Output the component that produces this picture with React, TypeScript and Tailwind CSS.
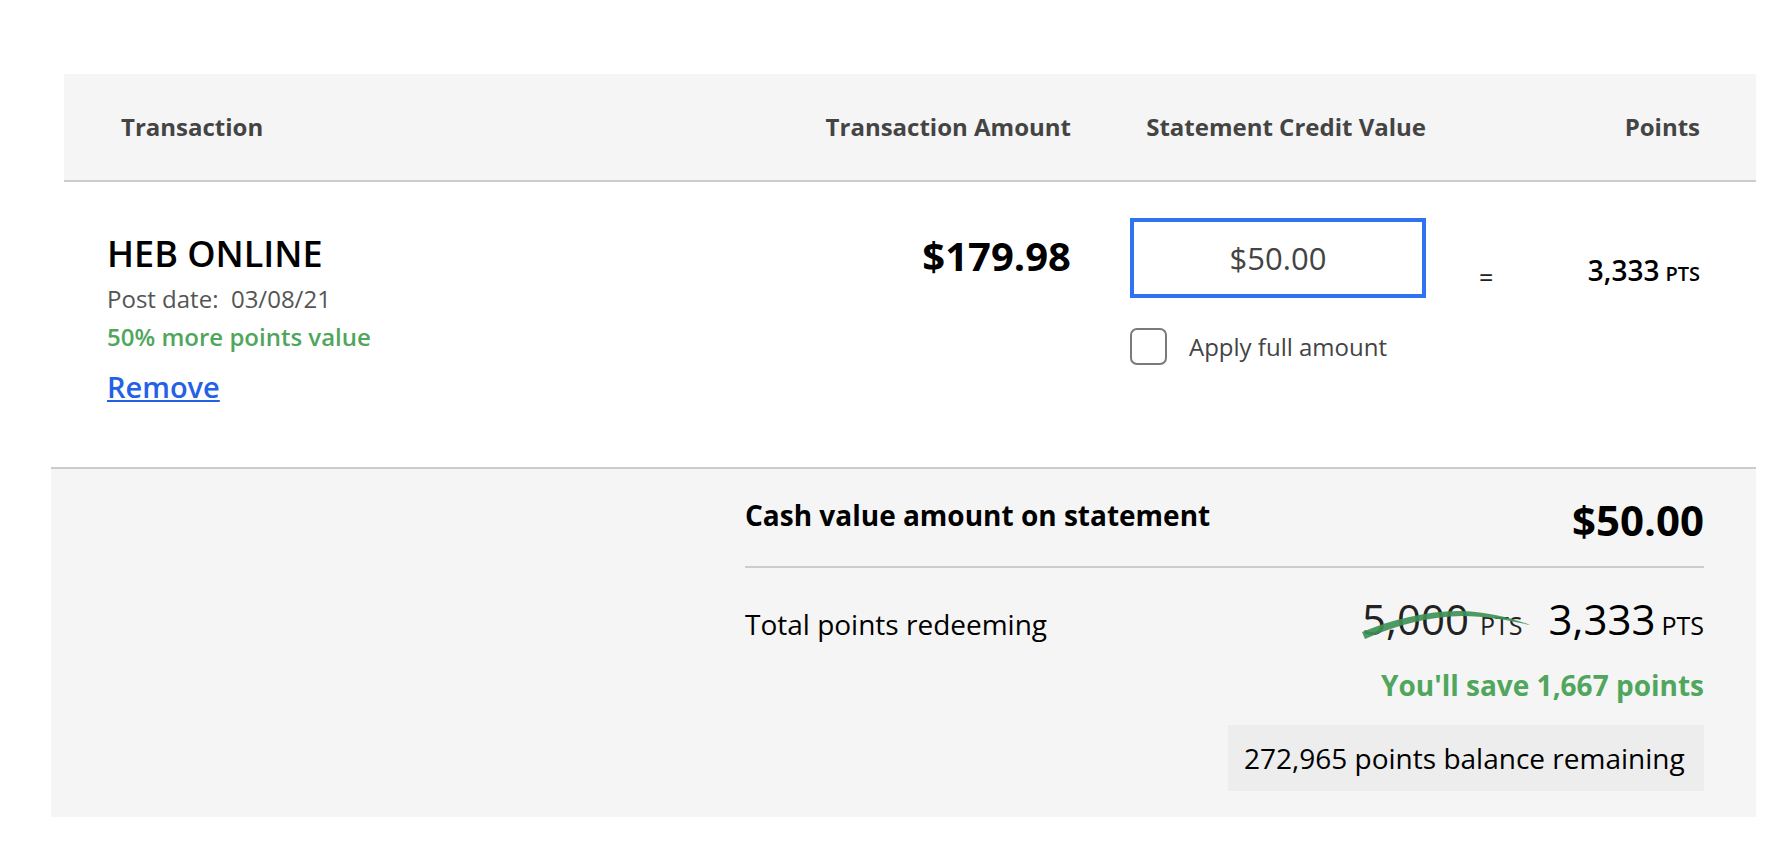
import React from "react"

function Strike() {
    return (
        <svg
            className="pointer-events-none absolute left-0 top-[12px]"
            width="172"
            height="34"
            viewBox="0 0 172 34"
        >
            <path
                d="M0 25 C 30 12, 70 3, 100 4 C 126 5, 150 11, 168 18 C 150 14, 124 9, 100 9 C 70 9, 34 18, 3 32 Z"
                fill="#3f9157"
                fillOpacity="0.92"
            />
        </svg>
    )
}

export default function App() {
    return (
        <div className="min-h-screen bg-white pt-[74px] font-['Open_Sans',sans-serif]">
            <div className="ml-[64px] w-[1692px]">
                {/* header */}
                <div className="flex h-[108px] items-center border-b-2 border-[#cccccc] bg-[#f5f5f5] text-[24px] font-bold text-[#444]">
                    <div className="w-[736px] pl-[57px]">Transaction</div>
                    <div className="w-[271px] text-right">Transaction Amount</div>
                    <div className="w-[59px]" />
                    <div className="w-[296px] text-right">Statement Credit Value</div>
                    <div className="w-[274px] text-right">Points</div>
                </div>

                {/* transaction row */}
                <div className="flex h-[285px]">
                    <div className="w-[736px] pl-[43px] pt-[50px]">
                        <div className="text-[36px] font-semibold leading-[44px] text-black">HEB ONLINE</div>
                        <div className="mt-[7px] text-[24px] leading-[32px] text-[#555]">Post date:&nbsp; 03/08/21</div>
                        <div className="mt-[6px] text-[24px] font-semibold leading-[32px] text-[#4fa65c]">
                            50% more points value
                        </div>
                        <a href="#" className="mt-[16px] block w-fit text-[29px] font-semibold leading-[36px] text-[#2461e6] underline">
                            Remove
                        </a>
                    </div>
                    <div className="w-[271px] pt-[50px] text-right text-[40px] font-bold leading-[48px] text-black">$179.98</div>
                    <div className="w-[59px]" />
                    <div className="w-[296px] pt-[36px]">
                        <input
                            readOnly
                            value="$50.00"
                            className="h-[80px] w-full border-4 border-[#2f72f2] bg-white text-center text-[31px] text-[#444] outline-none"
                        />
                        <label className="mt-[30px] flex items-center">
                            <span className="size-[37px] rounded-[7px] border-2 border-[#7a7a7a] bg-white" />
                            <span className="ml-[22px] text-[24px] text-[#444]">Apply full amount</span>
                        </label>
                    </div>
                    <div className="flex w-[274px]">
                        <div className="pl-[53px] pt-[77px] text-[25px] leading-[36px] text-[#222]">=</div>
                        <div className="flex-1 pt-[70px] text-right text-[28px] font-semibold leading-[36px] text-black">
                            3,333<span className="ml-[6px] text-[20px]">PTS</span>
                        </div>
                    </div>
                </div>
            </div>

            {/* summary */}
            <div className="ml-[51px] h-[350px] w-[1705px] border-t-2 border-[#cccccc] bg-[#f5f5f5] pl-[694px] pr-[52px]">
                <div className="flex items-start justify-between pt-[27px]">
                    <div className="mt-[2px] text-[28px] font-bold leading-[34px] text-black">Cash value amount on statement</div>
                    <div className="text-[42px] font-bold leading-[48px] text-black">$50.00</div>
                </div>
                <div className="mt-[22px] h-[2px] bg-[#cccccc]" />
                <div className="mt-[27px] flex items-baseline justify-between leading-[48px]">
                    <div className="text-[28px] text-black">Total points redeeming</div>
                    <div className="flex items-baseline text-[#222]">
                        <span className="relative text-[42px]">
                            5,000<span className="ml-[11px] text-[25px]">PTS</span>
                            <Strike />
                        </span>
                        <span className="ml-[26px] text-[42px] text-black">3,333</span>
                        <span className="ml-[6px] text-[25px] text-black">PTS</span>
                    </div>
                </div>
                <div className="mt-[19px] text-right text-[28px] font-bold leading-[34px] text-[#4fa65c]">You'll save 1,667 points</div>
                <div className="ml-auto mt-[23px] flex h-[66px] w-[476px] items-center bg-[#ededed] pl-[16px] text-[28px] text-black">
                    272,965 points balance remaining
                </div>
            </div>
        </div>
    )
}
